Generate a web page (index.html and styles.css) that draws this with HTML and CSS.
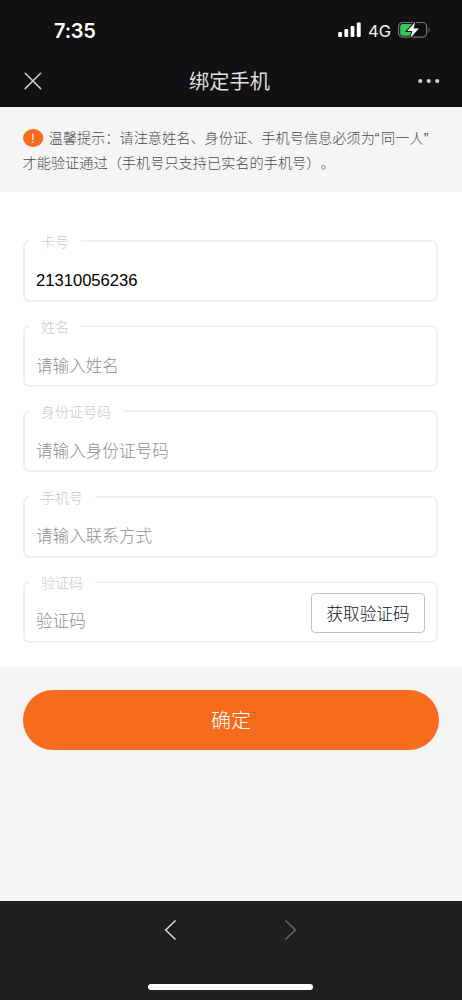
FILE: index.html
```html
<!DOCTYPE html>
<html lang="zh-CN">
<head>
<meta charset="utf-8">
<title>绑定手机</title>
<link rel="stylesheet" href="styles.css">
</head>
<body>
<div class="screen">
  <header class="top">
    <div class="status">
      <span class="time">7:35</span>
      <div class="indicators">
        <svg class="signal" width="24" height="16" viewBox="0 0 24 16" fill="#fff">
          <rect x="0.2" y="10" width="3.8" height="5" rx="1"/><rect x="6.4" y="7" width="3.8" height="8" rx="1"/><rect x="12.6" y="4" width="3.8" height="11" rx="1"/><rect x="18.8" y="0.4" width="3.9" height="14.6" rx="1"/>
        </svg>
        <span class="network">4G</span>
        <svg class="battery" width="34" height="18" viewBox="0 0 34 18">
          <rect x="0.600" y="1.500" width="28" height="14.600" rx="4" fill="none" stroke="#737373" stroke-width="1.200"/>
          <path d="M5 3H14V14.700H5Q2.200 14.700 2.200 12V6Q2.200 3 5 3Z" fill="#34c759"/>
          <path d="M30.500 6.300Q32.700 9 30.500 11.700Z" fill="#737373"/>
          <path d="M17.300 1L9.200 10.100H14.300L12.400 17L20.800 7.600H15.500Z" fill="#fff" stroke="#111" stroke-width="2" paint-order="stroke"/>
        </svg>
      </div>
    </div>
    <div class="nav">
      <svg width="18" height="18" viewBox="0 0 18 18" stroke="#cbcbcb" stroke-width="1.5" stroke-linecap="round"><path d="M1.200 1.200L16.600 16.600M16.600 1.200L1.200 16.600"/></svg>
      <h1 class="title">绑定手机</h1>
      <svg width="22" height="6" viewBox="0 0 22 6" fill="#d0d0d0"><circle cx="2.300" cy="3" r="2.100"/><circle cx="10.700" cy="3" r="2.100"/><circle cx="19.200" cy="3" r="2.100"/></svg>
    </div>
  </header>

  <p class="tip"><svg class="alert" width="21" height="18" viewBox="0 0 21 18"><ellipse cx="10.200" cy="9" rx="10.200" ry="9" fill="#f76b1c"/><path d="M9.800 4.500V11" stroke="#fff" stroke-width="1.200"/><circle cx="9.800" cy="13.300" r=".8" fill="#fff"/></svg>温馨提示：请注意姓名、身份证、手机号信息必须为<span class="quote">“</span>同一人<span class="quote">”</span><br>才能验证通过（手机号只支持已实名的手机号）。</p>

  <form class="form">
    <fieldset class="field"><legend class="label">卡号</legend><div class="value filled">21310056236</div></fieldset>
    <fieldset class="field"><legend class="label">姓名</legend><div class="value">请输入姓名</div></fieldset>
    <fieldset class="field"><legend class="label">身份证号码</legend><div class="value">请输入身份证号码</div></fieldset>
    <fieldset class="field"><legend class="label">手机号</legend><div class="value">请输入联系方式</div></fieldset>
    <fieldset class="field"><legend class="label">验证码</legend><div class="value code-row"><span>验证码</span><button type="button" class="get-code">获取验证码</button></div></fieldset>
  </form>

  <main class="actions"><button type="button" class="submit">确定</button></main>

  <footer class="bottom">
    <div class="history">
      <svg width="14" height="22" viewBox="0 0 14 22" fill="none" stroke="#d2d2d2" stroke-width="1.600"><path d="M11.500 1.500L1.700 11L11.500 20.500"/></svg>
      <svg width="14" height="22" viewBox="0 0 14 22" fill="none" stroke="#666" stroke-width="1.600"><path d="M1.500 1.500L11.300 11L1.500 20.500"/></svg>
    </div>
    <div class="home-bar"></div>
  </footer>
</div>
</body>
</html>
```

FILE: styles.css
```css
* { box-sizing: border-box; }
body {
  margin: 0;
  font-family: "Liberation Sans", "Noto Sans CJK SC", sans-serif;
  font-weight: 300;
  text-spacing-trim: space-all;
  background: #f5f5f5;
}
button { font-family: inherit; font-weight: 300; }
svg { display: block; flex: none; }
.screen { width: 462px; height: 1000px; display: flex; flex-direction: column; overflow: hidden; }

.top { height: 107px; background: #111; flex: none; }
.status {
  height: 60px;
  padding: 0 30px 0 54px;
  display: flex;
  align-items: center;
  justify-content: space-between;
}
.time { font: 600 20px/24px Inter, sans-serif; color: #fff; margin-top: 1px; letter-spacing: -0.2px; }
.indicators { display: flex; align-items: center; }
.network { font: 400 16.500px/20px Inter, sans-serif; color: #f2f2f2; margin: 1px 7px 0 6px; }
.nav {
  height: 42px;
  padding: 0 22px 0 24px;
  display: flex;
  align-items: center;
  justify-content: space-between;
}
.title { margin: 2px 1px 0 0; font-size: 20.200px; line-height: 30px; font-weight: 400; color: #dedede; }

.tip {
  margin: 0;
  height: 85px;
  flex: none;
  padding: 19px 0 0 22.500px;
  font-size: 14.2px;
  line-height: 25px;
  color: #4c4c4c;
  white-space: nowrap;
}
.alert { display: inline-block; vertical-align: -4px; margin-right: 5px; }
.quote { letter-spacing: 1.500px; }

.form {
  height: 475px;
  flex: none;
  background: #fff;
  padding: 39px 24px 0 23px;
  display: flex;
  flex-direction: column;
  gap: 14.2px;
}
.field {
  margin: 0;
  padding: 0 11px;
  height: 71px;
  min-width: 0;
  border: 2px solid #f0f0f0;
  border-radius: 7px;
}
.label {
  margin-left: -7px;
  padding: 1px 12px 0;
  font-size: 14px;
  line-height: 20px;
  height: 20px;
  color: #cacaca;
}
.value { height: 50px; padding-top: 11px; display: flex; align-items: center; font-size: 16.600px; line-height: 24px; color: #8e8e8e; }
.filled { color: #000; padding-top: 9px; }
.code-row { justify-content: space-between; }
.get-code {
  width: 114px;
  height: 40px;
  flex: none;
  margin: -19px 0 0;
  padding: 0;
  border: 1px solid #c4c4c4;
  border-radius: 4px;
  background: #fff;
  color: #111;
  font-size: 16.600px;
}

.actions { height: 234px; flex: none; padding: 23px 23px 0; background: #f5f5f5; }
.submit {
  display: block;
  width: 100%;
  height: 60px;
  border: 0;
  padding: 0 0 1px;
  border-radius: 30px;
  background: #f76b1c;
  color: #fff;
  font-size: 20px;
}

.bottom { height: 99px; flex: none; background: #1f1f1f; padding-top: 18px; display: flex; flex-direction: column; align-items: center; }
.history { display: flex; gap: 106px; }
.home-bar { width: 165px; height: 6px; margin: 43px 1px 0 0; border-radius: 3px; background: #fff; }
```
